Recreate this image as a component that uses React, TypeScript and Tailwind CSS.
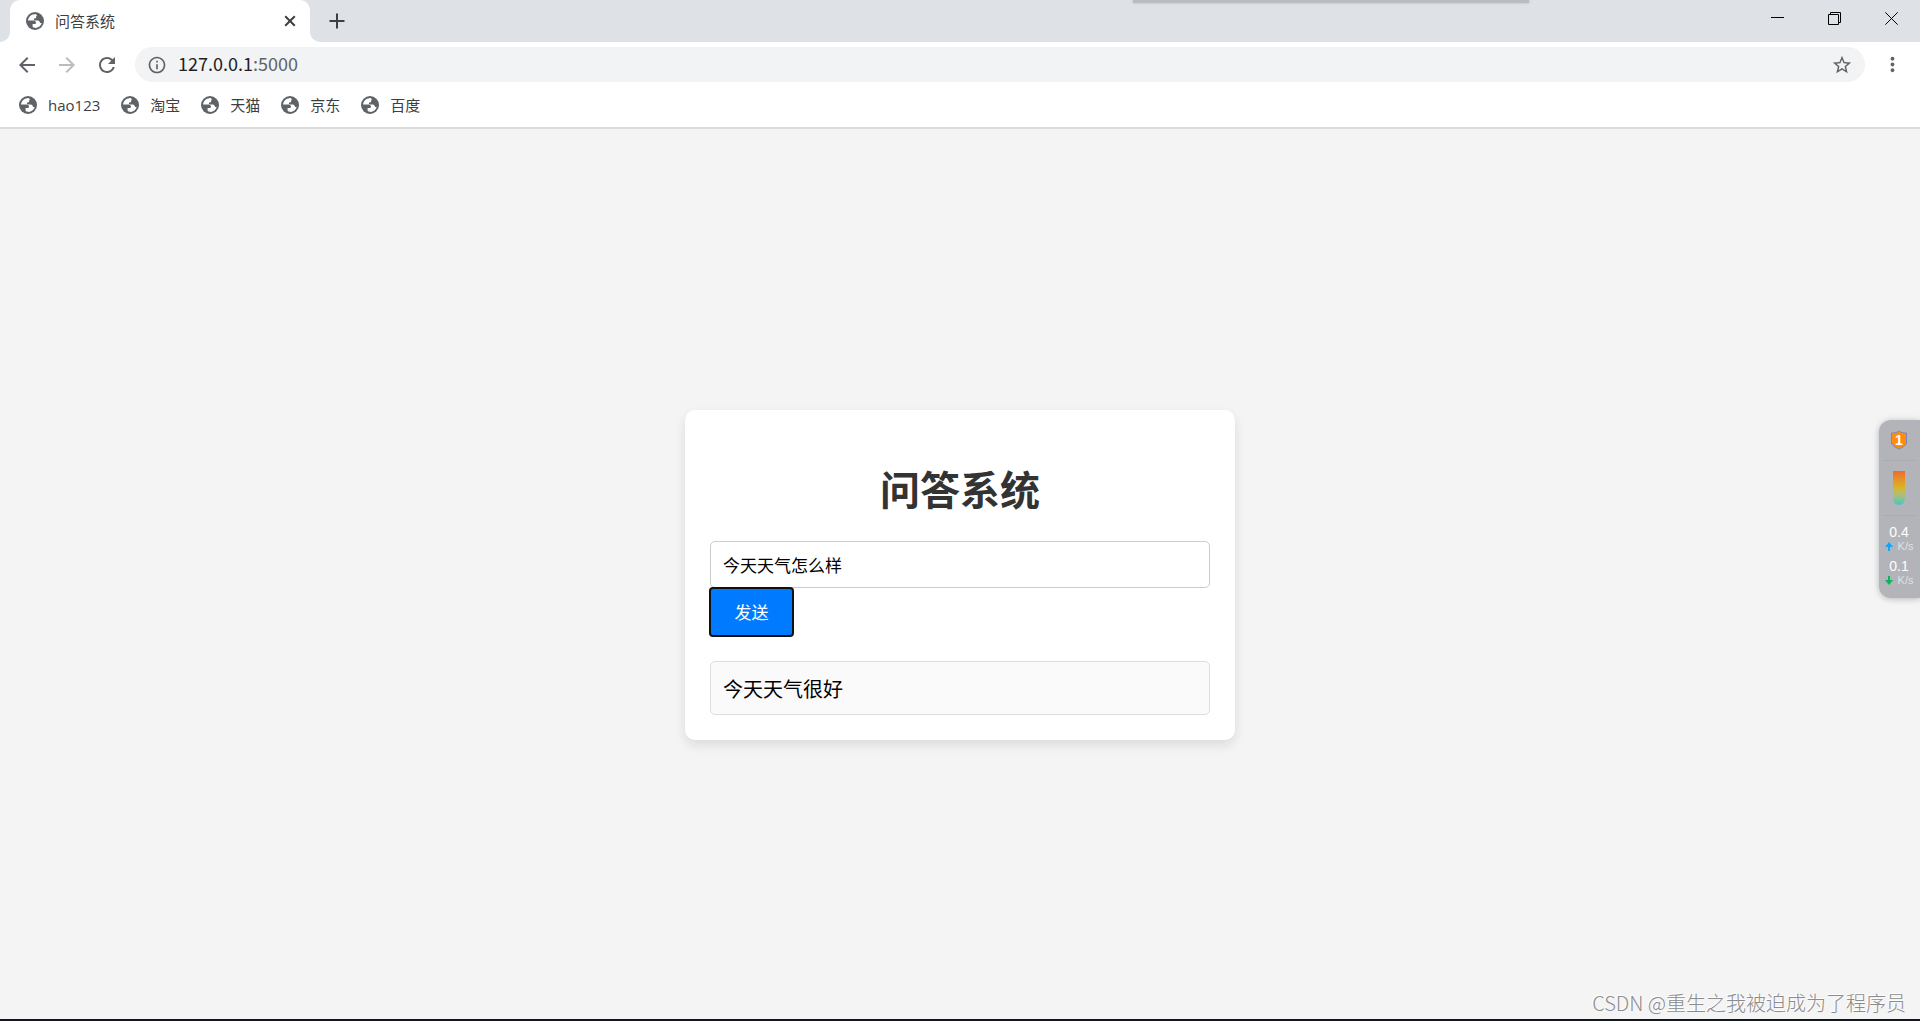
import React from "react";
import { MdArrowBack, MdArrowForward, MdRefresh, MdInfoOutline, MdStarBorder, MdMoreVert } from "react-icons/md";

const bookmarks = ["hao123", "淘宝", "天猫", "京东", "百度"];

function Globe() {
  return (
    <svg viewBox="0 0 18 18" className="size-[18px] shrink-0" aria-hidden="true">
      <circle cx="9" cy="9" r="9" fill="#5f6368" />
      <path
        d="M9.800 2C5.800 2 2.300 4.800 2 8.600h4.600c1.900 0 3.200.5 3.400 1.800.1.900-.4 1.500-1.400 1.600l-2 .1v2.600c.8.800 2 1.300 3.400 1.200 3-.6 5-2.400 5.700-5l-1.600.2c-.3-1.700-1-2.600-2.600-2.700H8.800c-.7-.1-1-.6-.9-1.200.1-.6.5-.9 1.100-.9h1.100V4.800c0-.7.4-1 1-1.100z"
        fill="#fff"
      />
    </svg>
  );
}

function TabStrip() {
  return (
    <header className="relative flex h-[42px] items-stretch bg-[#dee1e6]">
      <div className="flex w-[10px] bg-white">
        <div className="flex-1 rounded-br-[10px] bg-[#dee1e6]" />
      </div>
      <div className="flex w-[300px] items-center rounded-t-[10px] bg-white pl-4 pr-3 text-[#3c4043]">
        <Globe />
        <span className="ml-[11px] flex-1 font-['Noto_Sans_CJK_SC',sans-serif] text-[15px]">问答系统</span>
        <button aria-label="关闭标签页" className="flex size-4 items-center justify-center">
          <svg viewBox="0 0 16 16" className="size-4" fill="none" stroke="#3c4043" strokeWidth="2">
            <path d="M3.200 3.200l9.600 9.600M12.800 3.200l-9.600 9.600" />
          </svg>
        </button>
      </div>
      <div className="flex w-[10px] bg-white">
        <div className="flex-1 rounded-bl-[10px] bg-[#dee1e6]" />
      </div>
      <button aria-label="新标签页" className="ml-[9px] flex items-center">
        <svg viewBox="0 0 16 16" className="size-4" fill="none" stroke="#3c4043" strokeWidth="2">
          <path d="M.5 8h15M8 .5v15" />
        </svg>
      </button>
      <div className="absolute left-[59%] top-0 h-[3px] w-[396px] bg-[#b9bcc1] shadow-[0_0_3px_#b9bcc1]" />
      <div className="ml-auto flex h-9 items-center">
        <button aria-label="最小化" className="flex h-full w-[57px] items-center justify-center">
          <svg viewBox="0 0 13 13" className="size-[13px]" fill="none" stroke="#000">
            <path d="M0 5.500h13" />
          </svg>
        </button>
        <button aria-label="还原" className="flex h-full w-[57px] items-center justify-center">
          <svg viewBox="0 0 13 13" className="size-[13px]" fill="none" stroke="#000">
            <path d="M.5 2.500h10v10H.5zM2.500 2.500v-2h10v10h-2" />
          </svg>
        </button>
        <button aria-label="关闭" className="flex h-full w-[57px] items-center justify-center">
          <svg viewBox="0 0 13 13" className="size-[13px]" fill="none" stroke="#000">
            <path d="M.3.3l12.400 12.400M12.700.3L.3 12.700" />
          </svg>
        </button>
      </div>
    </header>
  );
}

function Toolbar() {
  return (
    <div className="flex h-[45px] items-center bg-white pl-[15px] pr-4 text-[#5f6368]">
      <button aria-label="后退"><MdArrowBack className="size-6" /></button>
      <button aria-label="前进" className="ml-4 text-[#babcbe]"><MdArrowForward className="size-6" /></button>
      <button aria-label="重新加载" className="ml-4"><MdRefresh className="size-6" /></button>
      <div className="ml-4 flex h-[35px] flex-1 items-center rounded-full bg-[#f1f3f4] pl-3 pr-3">
        <MdInfoOutline className="size-5 shrink-0" />
        <div className="ml-[11px] pb-[3px] font-['Noto_Sans_CJK_SC',sans-serif] text-lg leading-6 text-[#202124]">
          127.0.0.1<span className="text-[#5f6368]">:5000</span>
        </div>
        <button aria-label="为此页添加书签" className="ml-auto"><MdStarBorder className="size-[22px]" /></button>
      </div>
      <button aria-label="更多" className="ml-4"><MdMoreVert className="size-[23px]" /></button>
    </div>
  );
}

function Rate({ value, up }: { value: string; up?: boolean }) {
  return (
    <div>
      <div className="text-center text-[14px] leading-4 text-white">{value}</div>
      <div className="flex items-center justify-center gap-[5px] text-[11px] leading-3 text-[#dfe1e4]">
        <svg viewBox="0 0 8 9" className={up ? "h-[9px] w-2 text-[#12a5ff]" : "h-[9px] w-2 rotate-180 text-[#07b85b]"} fill="currentColor">
          <path d="M4 0l4 5H5v4H3V5H0z" />
        </svg>
        K/s
      </div>
    </div>
  );
}

function MonitorWidget() {
  return (
    <aside className="absolute right-0 top-[420px] flex h-[178px] w-[41px] flex-col items-center rounded-l-xl bg-[#b2b4b9] pr-px font-['Liberation_Sans',sans-serif] shadow-[0_1px_6px_rgba(0,0,0,0.25)]">
      <svg viewBox="0 0 18 20" className="mt-[10px] h-5 w-[18px]">
        <path d="M9 1c2 1.600 4.500 2 7.500 2v9c0 3-3 5-7.500 7-4.500-2-7.500-4-7.500-7V3C4.500 3 7 2.600 9 1z" fill="#ff8c12" stroke="#7c86b8" />
        <text x="9" y="14.500" textAnchor="middle" fontSize="14" fontWeight="700" fill="#fff">1</text>
      </svg>
      <div className="mt-[10px] h-px w-[33px] bg-[#a6acb1]" />
      <div className="mt-[10px] h-[34px] w-3 rounded-b-full bg-linear-to-b from-[#ec6b2d] via-[#d9b521] to-[#3bc5c0]" />
      <div className="mt-[10px] h-px w-[33px] bg-[#a6acb1]" />
      <div className="mt-2 flex flex-col gap-[6px]"><Rate value="0.4" up /><Rate value="0.1" /></div>
    </aside>
  );
}

export default function App() {
  return (
    <div className="relative flex min-h-screen flex-col bg-[#f4f4f4] font-['Open_Sans','Noto_Sans_CJK_SC',sans-serif]">
      <TabStrip />
      <Toolbar />
      <nav className="flex h-[42px] items-center gap-[21px] border-b-2 border-[#dadce0] bg-white px-[19px] pb-1 text-[15px] text-[#3c4043]">
        {bookmarks.map((name) => (
          <a key={name} href="#" className="flex items-center gap-[11px]">
            <Globe />
            <span className="min-w-[30px]">{name}</span>
          </a>
        ))}
      </nav>
      <main className="flex flex-1 items-center justify-center border-b-2 border-[#12181d] pt-[2px] font-['Noto_Sans_CJK_SC',sans-serif]">
        <form className="w-[550px] rounded-[10px] bg-white p-[25px] shadow-[0_5px_12px_rgba(0,0,0,0.1)]" onSubmit={(e) => e.preventDefault()}>
          <h1 className="mb-[26px] mt-[26px] text-center text-[40px] font-bold leading-[54px] text-[#333]">问答系统</h1>
          <input aria-label="问题" defaultValue="今天天气怎么样" className="block h-[47px] w-full rounded-[5px] border border-[#ccc] bg-white px-3 text-[17px] text-black" />
          <button className="relative -ml-px -mt-px block h-[50px] w-[85px] rounded-[4px] border-2 border-[#101010] bg-[#007bff] text-[17px] text-white">发送</button>
          <output className="mt-6 block h-[54px] rounded-[5px] border border-[#ddd] bg-[#fafafa] px-3 text-xl leading-[54px] text-black">今天天气很好</output>
        </form>
      </main>
      <MonitorWidget />
      <div className="absolute bottom-1 right-[14px] font-['Noto_Sans_CJK_SC',sans-serif] text-xl font-light text-[#8c8c8c] [text-shadow:-1px_-1px_0_#fff]">CSDN @重生之我被迫成为了程序员</div>
    </div>
  );
}
